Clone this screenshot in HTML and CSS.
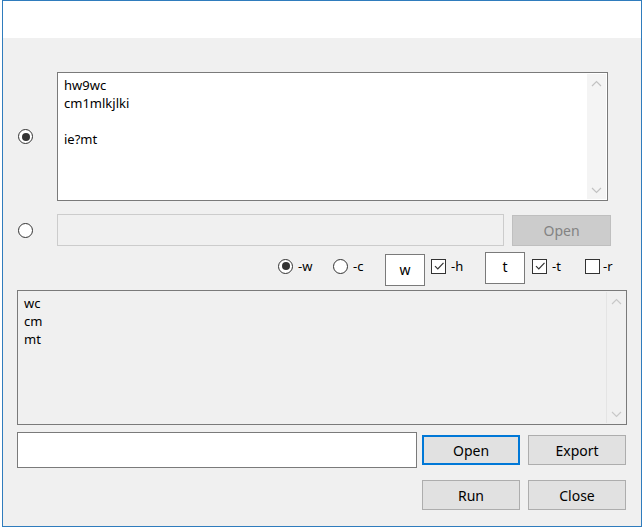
FILE: index.html
```html
<!DOCTYPE html>
<html>
<head>
<meta charset="utf-8">
<link rel="stylesheet" href="styles.css">
</head>
<body>
<div class="window">
  <div class="titlebar"></div>
  <div class="client">
    <div class="row row-a">
      <span class="radio checked"></span>
      <div class="memo">
        <div class="memo-text">hw9wc<br>cm1mlkjlki<br><br>ie?mt</div>
        <div class="vscroll">
          <svg class="chev" width="11" height="7" viewBox="0 0 11 7"><path d="M1 6 L5.5 1.5 L10 6" fill="none" stroke="#c2c2c2" stroke-width="1.2"/></svg>
          <svg class="chev" width="11" height="7" viewBox="0 0 11 7"><path d="M1 1 L5.5 5.5 L10 1" fill="none" stroke="#c2c2c2" stroke-width="1.2"/></svg>
        </div>
      </div>
    </div>
    <div class="row row-b">
      <span class="radio"></span>
      <div class="path-input"></div>
      <div class="btn btn-disabled btn-open1">Open</div>
    </div>
    <div class="row row-c">
      <div class="opt opt-w"><span class="radio checked"></span><span class="lbl">-w</span></div>
      <div class="opt opt-c"><span class="radio"></span><span class="lbl">-c</span></div>
      <div class="tbox tbox-w">w</div>
      <div class="opt opt-h"><span class="check on"><svg width="12" height="12" viewBox="0 0 12 12"><path d="M2 6.2 L4.8 9 L10.5 2.8" fill="none" stroke="#333" stroke-width="1.2"/></svg></span><span class="lbl">-h</span></div>
      <div class="tbox tbox-t">t</div>
      <div class="opt opt-t"><span class="check on"><svg width="12" height="12" viewBox="0 0 12 12"><path d="M2 6.2 L4.8 9 L10.5 2.8" fill="none" stroke="#333" stroke-width="1.2"/></svg></span><span class="lbl">-t</span></div>
      <div class="opt opt-r"><span class="check"></span><span class="lbl">-r</span></div>
    </div>
    <div class="row row-d">
      <div class="output">
        <div class="memo-text out-text">wc<br>cm<br>mt</div>
        <div class="vscroll out-scroll">
          <svg class="chev" width="11" height="7" viewBox="0 0 11 7"><path d="M1 6 L5.5 1.5 L10 6" fill="none" stroke="#c8c8c8" stroke-width="1.2"/></svg>
          <svg class="chev" width="11" height="7" viewBox="0 0 11 7"><path d="M1 1 L5.5 5.5 L10 1" fill="none" stroke="#c8c8c8" stroke-width="1.2"/></svg>
        </div>
      </div>
    </div>
    <div class="row row-e">
      <div class="file-input"></div>
      <div class="btn btn-focus">Open</div>
      <div class="btn">Export</div>
    </div>
    <div class="row row-f">
      <div class="btn">Run</div>
      <div class="btn">Close</div>
    </div>
  </div>
</div>
</body>
</html>
```
FILE: styles.css
```css
* { box-sizing: border-box; }
html, body { margin: 0; padding: 0; background: #ffffff; }
body {
  font-family: "Noto Sans", "Open Sans", "Liberation Sans", sans-serif;
  font-size: 13px;
  color: #000;
}
.window {
  margin-left: 2px;
  width: 640px;
  height: 527px;
  border: 1px solid #2f7cbd;
  display: flex;
  flex-direction: column;
  background: #f0f0f0;
}
.titlebar {
  height: 37px;
  background: #ffffff;
  flex: none;
}
.client {
  flex: 1;
  background: #f0f0f0;
  padding-top: 34px;
  display: flex;
  flex-direction: column;
}
.row { display: flex; align-items: center; }

.radio {
  flex: none;
  width: 15px;
  height: 15px;
  border: 1px solid #333;
  border-radius: 50%;
  background: #fff;
  display: flex;
  align-items: center;
  justify-content: center;
}
.radio.checked::after {
  content: "";
  width: 8px;
  height: 8px;
  border-radius: 50%;
  background: #333;
}
.check {
  flex: none;
  width: 15px;
  height: 15px;
  border: 1px solid #333;
  background: #fff;
  display: flex;
  align-items: center;
  justify-content: center;
}
.check svg { display: block; }

.row-a { height: 129px; padding-left: 15px; }
.memo {
  margin-left: 24px;
  width: 551px;
  height: 129px;
  border: 1px solid #7a7a7a;
  background: #fff;
  display: flex;
}
.memo-text {
  flex: 1;
  padding: 3px 6px;
  line-height: 18px;
}
.vscroll {
  width: 19px;
  margin: 1px;
  background: #f4f4f4;
  display: flex;
  flex-direction: column;
  justify-content: space-between;
  align-items: center;
  padding: 6px 0 5px;
}
.chev { display: block; }

.row-b { margin-top: 13px; height: 32px; padding-left: 15px; }
.path-input {
  margin-left: 24px;
  width: 447px;
  height: 32px;
  border: 1px solid #cccccc;
  background: #f0f0f0;
}
.btn {
  flex: none;
  width: 98px;
  height: 30px;
  border: 1px solid #adadad;
  background: #e1e1e1;
  display: flex;
  align-items: center;
  justify-content: center;
  font-size: 14px;
  color: #000;
}
.btn-disabled {
  background: #cccccc;
  border-color: #bfbfbf;
  color: #838383;
}
.btn-open1 { margin-left: 8px; width: 99px; height: 31px; }

.row-c {
  margin-top: 6px;
  padding-left: 275px;
  align-items: flex-start;
  height: 35px;
}
.opt {
  display: flex;
  align-items: center;
  height: 28px;
  flex: none;
}
.lbl { margin-left: 5px; font-size: 13px; }
.opt-w { width: 55px; }
.opt-c { width: 52px; }
.tbox {
  flex: none;
  width: 40px;
  height: 32px;
  border: 1px solid #7a7a7a;
  background: #fff;
  display: flex;
  align-items: center;
  justify-content: center;
  font-size: 14px;
}
.tbox-w { margin-top: 2px; height: 32px; padding-bottom: 2px; }
.tbox-t { margin-top: 0; height: 32px; padding-bottom: 4px; }
.opt-h { margin-left: 6px; width: 54px; }
.opt-t { margin-left: 7px; width: 53px; }
.opt-r .lbl { margin-left: 3px; }

.row-d { margin-top: 3px; padding-left: 14px; }
.output {
  width: 610px;
  height: 135px;
  border: 1px solid #7a7a7a;
  background: #f0f0f0;
  display: flex;
}
.out-text { padding-top: 3px; padding-left: 6px; }
.out-scroll { background: #f0f0f0; border-left: 1px solid #e4e4e4; margin: 1px 1px 1px 0; }

.row-e { margin-top: 7px; padding-left: 14px; height: 36px; }
.file-input {
  width: 400px;
  height: 36px;
  border: 1px solid #7a7a7a;
  background: #fff;
}
.row-e .btn { margin-left: 8px; }
.row-e .btn-focus {
  margin-left: 5px;
  border: 2px solid #0078d7;
}
.row-f {
  margin-top: 12px;
  justify-content: flex-end;
  padding-right: 15px;
  gap: 8px;
}
```
